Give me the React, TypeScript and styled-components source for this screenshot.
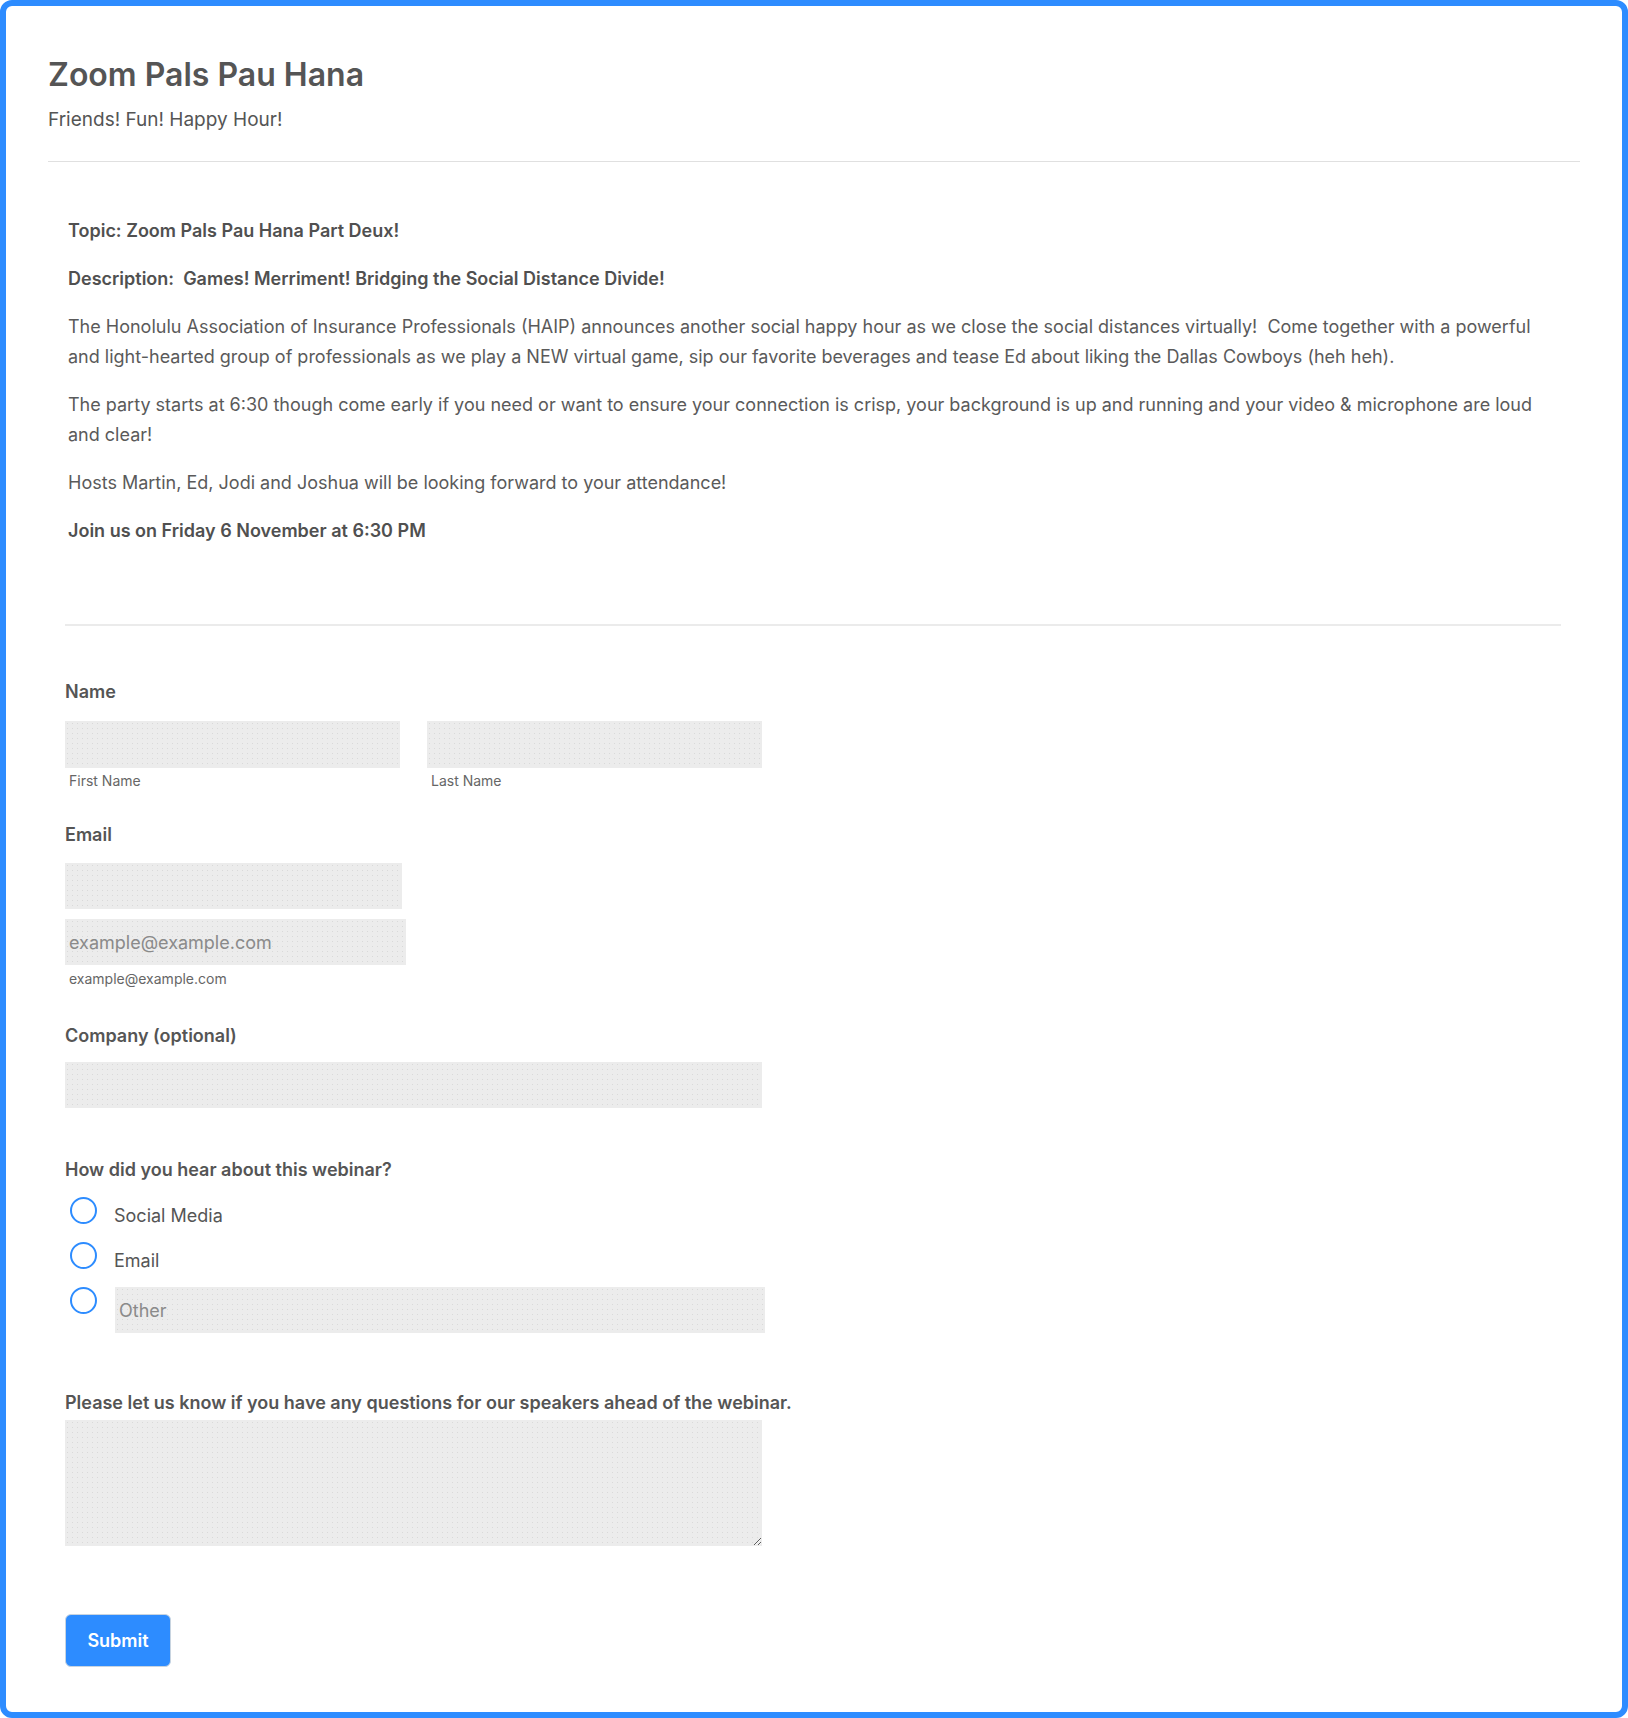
import React from "react";
import styled, { createGlobalStyle } from "styled-components";

const GlobalStyle = createGlobalStyle`
  html, body {
    margin: 0;
    padding: 0;
    background: #ffffff;
  }
  * { box-sizing: border-box; }
  body {
    font-family: Inter, "Noto Sans", sans-serif;
    color: #555555;
  }
`;

const Page = styled.div`
  min-height: 100vh;
  border: 6px solid #2d8cff;
  border-radius: 12px;
  padding: 49px 42px 43px;
  background: #ffffff;
`;

const Header = styled.header`
  display: flex;
  flex-direction: column;
`;

const Title = styled.h1`
  margin: 0;
  font-size: 32px;
  line-height: 40px;
  font-weight: 600;
  color: #555555;
`;

const Subtitle = styled.p`
  margin: 13px 0 0;
  font-size: 19px;
  line-height: 24px;
  font-weight: 400;
  color: #555555;
`;

const Rule = styled.hr`
  margin: 29px 0 0;
  border: none;
  border-top: 1px solid #e0e0e0;
  height: 0;
`;

const Content = styled.section`
  padding: 54px 20px 0;
`;

const Para = styled.p<{ $bold?: boolean }>`
  margin: 0 0 18px;
  font-size: 18px;
  line-height: 30px;
  font-weight: ${(p) => (p.$bold ? 600 : 400)};
  color: ${(p) => (p.$bold ? "#505050" : "#5a5a5a")};
  &:last-child {
    margin-bottom: 0;
  }
`;

const FormArea = styled.form`
  margin: 78px 19px 0 17px;
  display: flex;
  flex-direction: column;
  align-items: flex-start;
`;

const Divider = styled.div`
  align-self: stretch;
  height: 2px;
  background: #ebebeb;
`;

const Field = styled.div<{ $top: number }>`
  margin-top: ${(p) => p.$top}px;
  display: flex;
  flex-direction: column;
  align-items: flex-start;
`;

const Label = styled.label<{ $gap: number }>`
  display: block;
  margin-bottom: ${(p) => p.$gap}px;
  font-size: 18px;
  line-height: 24px;
  font-weight: 600;
  color: #555555;
`;

const NameRow = styled.div`
  display: flex;
  gap: 27px;
`;

const NamePart = styled.div`
  display: flex;
  flex-direction: column;
`;

const TextInput = styled.input<{ $w: number; $h?: number }>`
  width: ${(p) => p.$w}px;
  height: ${(p) => p.$h ?? 46}px;
  border: none;
  outline: none;
  padding: 0 4px;
  background-color: #ececec;
  background-image: radial-gradient(#d9d9d9 0.7px, transparent 0.9px);
  background-size: 5px 5px;
  font-family: Inter, "Noto Sans", sans-serif;
  font-size: 18px;
  color: #555555;
  &::placeholder {
    color: #8a8a8a;
  }
`;

const StackedInput = styled(TextInput)`
  & + & {
    margin-top: 10px;
  }
`;

const SubLabel = styled.span<{ $top: number }>`
  display: block;
  margin-top: ${(p) => p.$top}px;
  padding-left: 4px;
  font-size: 14px;
  line-height: 18px;
  color: #666666;
`;

const RadioList = styled.div`
  display: flex;
  flex-direction: column;
  gap: 14px;
  margin-left: 5px;
`;

const RadioRow = styled.div`
  display: flex;
  align-items: flex-start;
`;

const Radio = styled.input.attrs({ type: "radio" })`
  appearance: none;
  -webkit-appearance: none;
  margin: 0;
  width: 27px;
  height: 27px;
  flex: 0 0 27px;
  border: 2.5px solid #2d8cff;
  border-radius: 50%;
  background: #ffffff;
`;

const RadioText = styled.label`
  margin-left: 17px;
  padding-top: 7px;
  font-size: 18px;
  line-height: 24px;
  color: #555555;
`;

const OtherInput = styled(TextInput)`
  margin-left: 18px;
`;

const TextArea = styled.textarea`
  width: 697px;
  height: 126px;
  border: none;
  outline: none;
  padding: 4px;
  background-color: #ececec;
  background-image: radial-gradient(#d9d9d9 0.7px, transparent 0.9px);
  background-size: 5px 5px;
  font-family: Inter, "Noto Sans", sans-serif;
  font-size: 18px;
  color: #555555;
  display: block;
`;

const SubmitButton = styled.button`
  margin-top: 68px;
  width: 106px;
  height: 53px;
  border: 1px solid #c8d4e0;
  border-radius: 6px;
  background: #2d8cff;
  color: #ffffff;
  font-family: Inter, "Noto Sans", sans-serif;
  font-size: 18px;
  font-weight: 600;
  cursor: pointer;
`;

export default function App() {
  return (
    <>
      <GlobalStyle />
      <Page>
        <Header>
          <Title>Zoom Pals Pau Hana</Title>
          <Subtitle>Friends! Fun! Happy Hour!</Subtitle>
          <Rule />
        </Header>

        <Content>
          <Para $bold>Topic: Zoom Pals Pau Hana Part Deux!</Para>
          <Para $bold>Description:&nbsp; Games! Merriment! Bridging the Social Distance Divide!</Para>
          <Para>
            The Honolulu Association of Insurance Professionals (HAIP) announces another social happy hour as we
            close the social distances virtually!&nbsp; Come together with a powerful and light-hearted group of
            professionals as we play a NEW virtual game, sip our favorite beverages and tease Ed about liking the
            Dallas Cowboys (heh heh).
          </Para>
          <Para>
            The party starts at 6:30 though come early if you need or want to ensure your connection is crisp, your
            background is up and running and your video &amp; microphone are loud and clear!
          </Para>
          <Para>Hosts Martin, Ed, Jodi and Joshua will be looking forward to your attendance!</Para>
          <Para $bold>Join us on Friday 6 November at 6:30 PM</Para>
        </Content>

        <FormArea onSubmit={(e) => e.preventDefault()}>
          <Divider />

          <Field $top={54}>
            <Label $gap={17}>Name</Label>
            <NameRow>
              <NamePart>
                <TextInput $w={335} $h={47} />
                <SubLabel $top={4}>First Name</SubLabel>
              </NamePart>
              <NamePart>
                <TextInput $w={335} $h={47} />
                <SubLabel $top={4}>Last Name</SubLabel>
              </NamePart>
            </NameRow>
          </Field>

          <Field $top={33}>
            <Label $gap={16}>Email</Label>
            <StackedInput $w={337} />
            <StackedInput $w={341} placeholder="example@example.com" />
            <SubLabel $top={5}>example@example.com</SubLabel>
          </Field>

          <Field $top={36}>
            <Label $gap={14}>Company (optional)</Label>
            <TextInput $w={697} />
          </Field>

          <Field $top={50}>
            <Label $gap={15}>How did you hear about this webinar?</Label>
            <RadioList>
              <RadioRow>
                <Radio name="heard" />
                <RadioText>Social Media</RadioText>
              </RadioRow>
              <RadioRow>
                <Radio name="heard" />
                <RadioText>Email</RadioText>
              </RadioRow>
              <RadioRow>
                <Radio name="heard" />
                <OtherInput $w={650} placeholder="Other" />
              </RadioRow>
            </RadioList>
          </Field>

          <Field $top={58}>
            <Label $gap={5}>Please let us know if you have any questions for our speakers ahead of the webinar.</Label>
            <TextArea />
          </Field>

          <SubmitButton type="submit">Submit</SubmitButton>
        </FormArea>
      </Page>
    </>
  );
}
